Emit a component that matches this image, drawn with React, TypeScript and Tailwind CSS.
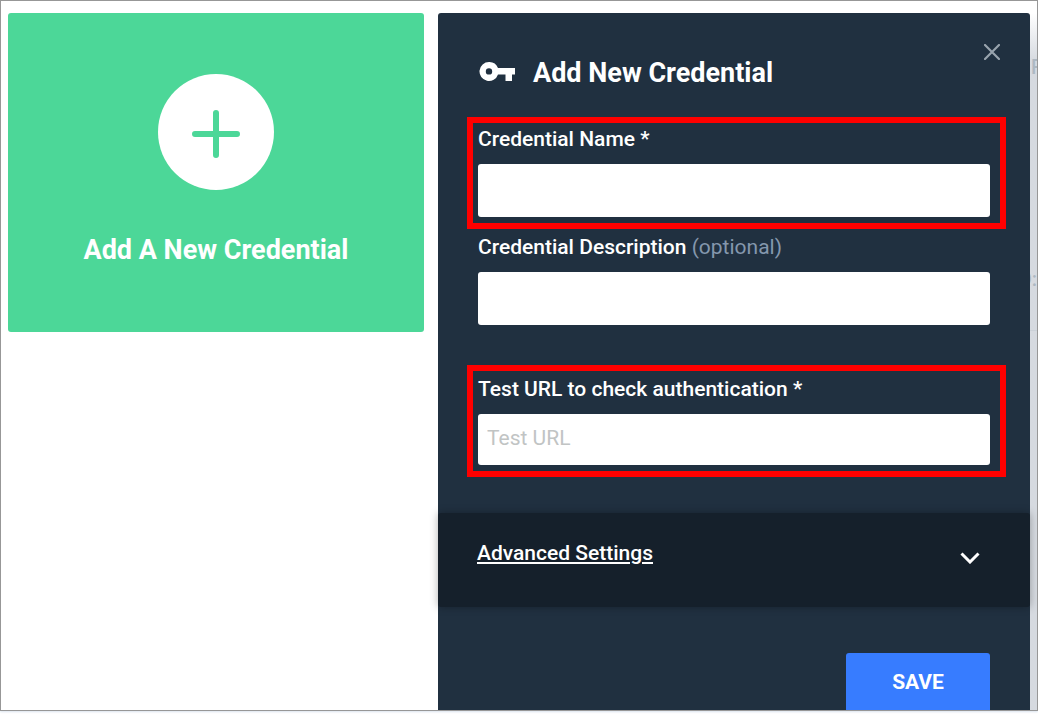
import React from "react";

export default function App() {
  return (
    <div className="h-screen bg-white pb-[15px] font-[Roboto,sans-serif] text-white">
      <div className="flex h-full overflow-hidden border border-[#979797] bg-white pt-3 pl-[7px] shadow-[0_1px_2px_#dbe4ee]">
        <div className="grid grow grid-cols-[416fr_592fr] gap-[14px]">
          <AddCredentialCard />
          <CredentialPanel />
        </div>
        <PageBehind />
      </div>
    </div>
  );
}

function AddCredentialCard() {
  return (
    <button
      type="button"
      className="flex h-[319px] flex-col items-center self-start rounded-[3px] bg-[#4cd798] pt-[61px]"
    >
      <span className="flex size-[116px] items-center justify-center rounded-full bg-white">
        <svg
          className="mt-1 size-12"
          viewBox="0 0 48 48"
          stroke="#4cd798"
          strokeWidth="6"
          strokeLinecap="round"
          aria-hidden="true"
        >
          <path d="M24 3v42M3 24h42" />
        </svg>
      </span>
      <span className="mt-[42px] text-[27px] leading-9 font-bold">
        Add A New Credential
      </span>
    </button>
  );
}

function CredentialPanel() {
  return (
    <form className="relative min-h-0 rounded-t-[3px] bg-[#203040]">
      <button
        type="button"
        aria-label="Close"
        className="absolute top-[31px] right-[30px] text-[#98a3ad]"
      >
        <svg
          className="size-4"
          viewBox="0 0 16 16"
          stroke="currentColor"
          strokeWidth="2.2"
          strokeLinecap="round"
        >
          <path d="M1 1l14 14M15 1L1 15" />
        </svg>
      </button>

      <div className="flex items-center gap-[18px] px-[41px] pt-[42px]">
        <svg
          className="h-[22px] w-9"
          viewBox="0 0 36 22"
          fill="currentColor"
          aria-hidden="true"
        >
          <path
            fillRule="evenodd"
            d="M10 0a9.500 9.500 0 1 0 9 12.500h7.500v6.500h6.500v-6.500h3V6H19A9.500 9.500 0 0 0 10 0zm0 6.200a3.200 3.200 0 1 1 0 6.400 3.200 3.200 0 0 1 0-6.400z"
          />
        </svg>
        <h2 className="text-[27px] leading-9 font-bold">Add New Credential</h2>
      </div>

      <div className="mt-[26px] mr-6 ml-[29px] border-6 border-[#ff0000] pt-1 pr-[10px] pb-[6px] pl-[5px]">
        <Field id="name" label="Credential Name *" />
      </div>
      <div className="mt-[6px] px-10">
        <Field id="description" label="Credential Description" optional />
      </div>
      <div className="mt-10 mr-6 ml-[29px] border-6 border-[#ff0000] pt-[6px] pr-[10px] pb-[6px] pl-[5px]">
        <Field
          id="url"
          label="Test URL to check authentication *"
          placeholder="Test URL"
          inputClassName="h-[51px]"
        />
      </div>

      <button
        type="button"
        className="mt-9 flex h-[94px] w-full items-start justify-between rounded-[3px] bg-[#15202b] pt-7 pr-[50px] pl-[39px] shadow-[0_0_8px_rgba(0,0,0,0.3)]"
      >
        <span className="text-[21px] leading-6 font-medium underline decoration-2 underline-offset-2">
          Advanced Settings
        </span>
        <svg
          className="mt-[11px] h-3 w-5"
          viewBox="0 0 20 12"
          fill="none"
          stroke="currentColor"
          strokeWidth="3"
          aria-hidden="true"
        >
          <path d="M1.500 1.500l8.500 8.500 8.500-8.500" />
        </svg>
      </button>

      <div className="mt-[46px] flex justify-end px-10">
        <button
          type="submit"
          className="h-[60px] w-36 rounded-[3px] bg-[#377cff] text-[21px] font-bold"
        >
          SAVE
        </button>
      </div>
    </form>
  );
}

function Field({
  id,
  label,
  optional = false,
  placeholder,
  inputClassName = "h-[53px]",
}: {
  id: string;
  label: string;
  optional?: boolean;
  placeholder?: string;
  inputClassName?: string;
}) {
  return (
    <div>
      <label
        htmlFor={id}
        className="mb-[13px] block text-[21px] leading-6 font-medium"
      >
        {label}
        {optional && (
          <span className="font-normal text-[#8497ad]"> (optional)</span>
        )}
      </label>
      <input
        id={id}
        type="text"
        placeholder={placeholder}
        className={`block w-full rounded-[3px] bg-white px-[9px] pb-1 text-[21px] text-[#203040] placeholder:text-[#c1c4c4] ${inputClassName}`}
      />
    </div>
  );
}

// sliver of the dimmed page to the right of the panel
function PageBehind() {
  return (
    <div className="w-[7px] shrink-0 overflow-hidden bg-linear-to-b from-white to-[#d6dae0] to-[48px] text-[20px] leading-6 text-[#adb8c2]">
      <div className="mt-[42px] pl-px font-medium">R</div>
      <div className="mt-[188px] flex h-16 justify-end border-b border-[#cbd1d8] font-medium">
        D:
      </div>
    </div>
  );
}
